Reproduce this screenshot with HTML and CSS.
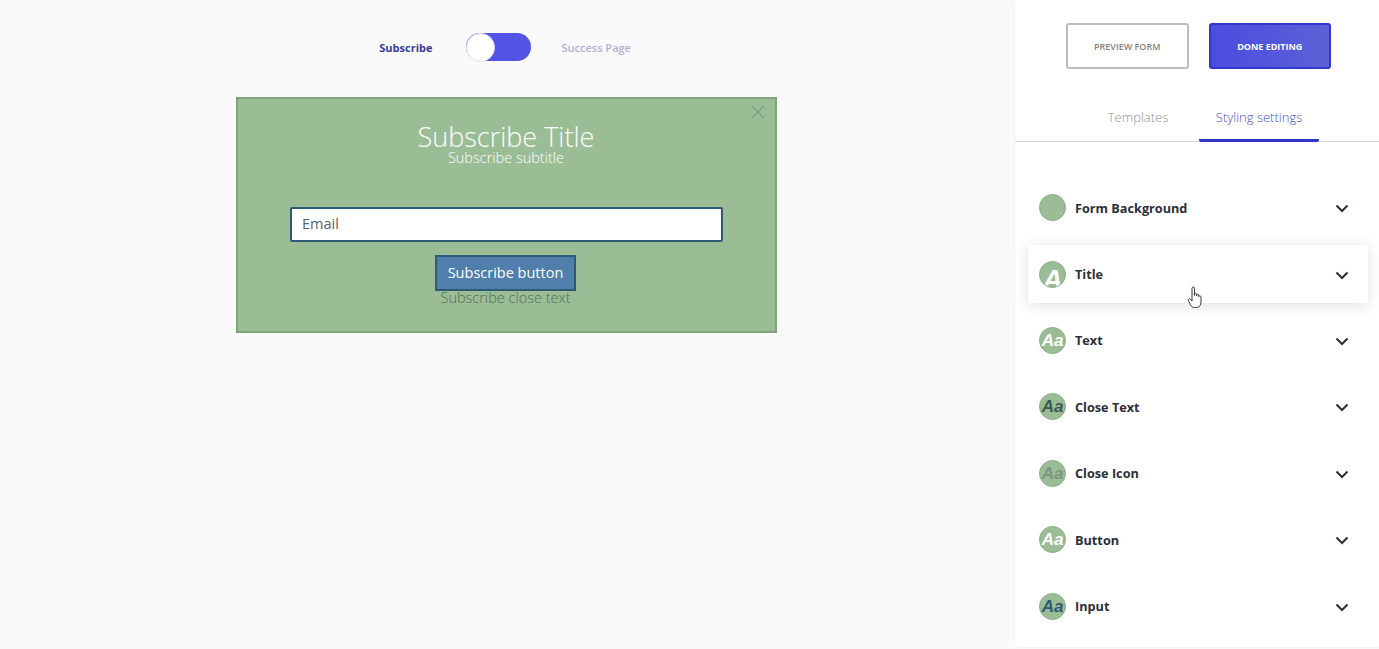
FILE: index.html
```html
<!DOCTYPE html>
<html lang="en">
  <head>
    <meta charset="UTF-8" />
    <title>Form editor</title>
    <link rel="stylesheet" href="styles.css">
  </head>
  <body>
    <div class="editor">
      <main class="canvas">
        <div class="mode-switch">
          <span class="mode active">Subscribe</span>
          <div class="toggle"><div class="knob"></div></div>
          <span class="mode">Success Page</span>
        </div>

        <div class="form-preview">
          <svg class="close-x" width="14" height="14" viewBox="0 0 14 14">
            <path d="M1 1L13 13M13 1L1 13" stroke="#7c9a80" stroke-width="1.2" fill="none" />
          </svg>
          <div class="form-title">Subscribe Title</div>
          <div class="form-subtitle">Subscribe subtitle</div>
          <div class="email-input">Email</div>
          <div class="subscribe-button">Subscribe button</div>
          <div class="close-text">Subscribe close text</div>
        </div>
      </main>

      <aside class="sidebar">
        <div class="actions">
          <button class="btn-preview">PREVIEW FORM</button>
          <button class="btn-done">DONE EDITING</button>
        </div>

        <div class="tabs">
          <div class="tab">Templates</div>
          <div class="tab selected">Styling settings</div>
        </div>

        <div class="settings">
          <div class="setting">
            <div class="swatch"></div>
            <span class="setting-name">Form Background</span>
            <svg class="chevron" width="14" height="9" viewBox="0 0 14 9"><path d="M1.5 1.5L7 7L12.5 1.5" /></svg>
          </div>
          <div class="setting hovered">
            <div class="swatch big-a">A</div>
            <span class="setting-name">Title</span>
            <svg class="chevron" width="14" height="9" viewBox="0 0 14 9"><path d="M1.5 1.5L7 7L12.5 1.5" /></svg>
            <svg class="hand" width="16" height="24" viewBox="0 0 16 24">
              <path d="M5 13V3.2C5 1.6 7.4 1.6 7.4 3.2V10.5V9.4C7.4 8 9.6 8 9.6 9.4V11V10C9.6 8.8 11.7 8.8 11.7 10.2V11.6C11.7 10.6 14 10.6 14 12V17C14 20 12.5 22.5 9.5 22.5H7.5C5.5 22.5 4.5 21.5 3.5 19.8L1.4 15.6C0.7 14 2.5 13 3.6 14.4L5 16Z" fill="#fff" stroke="#33383f" stroke-width="1" />
            </svg>
          </div>
          <div class="setting">
            <div class="swatch aa c-white">Aa</div>
            <span class="setting-name">Text</span>
            <svg class="chevron" width="14" height="9" viewBox="0 0 14 9"><path d="M1.5 1.5L7 7L12.5 1.5" /></svg>
          </div>
          <div class="setting">
            <div class="swatch aa c-dark">Aa</div>
            <span class="setting-name">Close Text</span>
            <svg class="chevron" width="14" height="9" viewBox="0 0 14 9"><path d="M1.5 1.5L7 7L12.5 1.5" /></svg>
          </div>
          <div class="setting">
            <div class="swatch aa c-grey">Aa</div>
            <span class="setting-name">Close Icon</span>
            <svg class="chevron" width="14" height="9" viewBox="0 0 14 9"><path d="M1.5 1.5L7 7L12.5 1.5" /></svg>
          </div>
          <div class="setting">
            <div class="swatch aa c-white">Aa</div>
            <span class="setting-name">Button</span>
            <svg class="chevron" width="14" height="9" viewBox="0 0 14 9"><path d="M1.5 1.5L7 7L12.5 1.5" /></svg>
          </div>
          <div class="setting">
            <div class="swatch aa c-blue">Aa</div>
            <span class="setting-name">Input</span>
            <svg class="chevron" width="14" height="9" viewBox="0 0 14 9"><path d="M1.5 1.5L7 7L12.5 1.5" /></svg>
          </div>
        </div>
      </aside>
    </div>
  </body>
</html>
```

FILE: styles.css
```css
* {
  box-sizing: border-box;
}

html,
body {
  height: 100%;
}

body {
  margin: 0;
  font-family: "Open Sans", sans-serif;
  background: #fafafa;
  overflow: hidden;
}

.editor {
  display: flex;
  height: 649px;
}

.canvas {
  width: 1015px;
  padding: 30px 2px 0 0;
  display: flex;
  flex-direction: column;
  align-items: center;
}

.mode-switch {
  display: flex;
  align-items: center;
  height: 34px;
  margin-left: -4px;
}

.mode {
  font-size: 11px;
  font-weight: 600;
  color: #b0afd8;
  width: 100px;
}

.mode.active {
  font-weight: 700;
  color: #3a3a9e;
  text-align: right;
  margin-right: 33px;
  width: 85px;
}

.mode:last-child {
  margin-left: 31px;
}

.toggle {
  width: 65px;
  height: 28px;
  background: #5353e6;
  border-radius: 14px;
  flex-shrink: 0;
}

.knob {
  width: 29px;
  height: 29px;
  border-radius: 50%;
  background: #fff;
  border: 1px solid #e3e3f2;
}

.form-preview {
  position: relative;
  width: 541px;
  height: 236px;
  margin-top: 33px;
  background: #9bbd95;
  border: 2px solid #7ea37b;
  display: flex;
  flex-direction: column;
  align-items: center;
  color: #fff;
  padding-top: 20px;
}

.close-x {
  position: absolute;
  top: 6px;
  right: 10px;
}

.form-title {
  font-size: 27px;
  font-weight: 300;
  line-height: 36px;
  margin-right: 1px;
}

.form-subtitle {
  font-size: 14.5px;
  line-height: 20px;
  margin: -7px 1px 0 0;
  font-weight: 300;
}

.email-input {
  width: 433px;
  height: 35px;
  margin-top: 39px;
  background: #fff;
  border: 2px solid #2e5a78;
  border-radius: 2px;
  padding-left: 10px;
  font-size: 14.5px;
  line-height: 30px;
  color: #56646c;
}

.subscribe-button {
  width: 141px;
  height: 36px;
  margin: 13px 2px 0 0;
  background: #4f7faa;
  border: 2px solid #2e5a78;
  font-size: 14.5px;
  line-height: 32px;
  text-align: center;
}

.close-text {
  font-size: 14.5px;
  line-height: 16px;
  margin: -1px 2px 0 0;
  color: #4f7058;
  font-weight: 300;
}

.sidebar {
  width: 364px;
  height: 647px;
  background: #fff;
  box-shadow: 0 0 3px rgba(0, 0, 0, 0.06);
}

.actions {
  display: flex;
  gap: 20px;
  padding: 23px 48px 0 51px;
}

.actions button {
  width: 123px;
  height: 46px;
  border-radius: 3px;
  font-family: inherit;
  font-size: 9px;
  padding: 0;
}

.btn-preview {
  background: #fff;
  border: 2px solid #bdbdbd;
  color: #828282;
  font-weight: 600;
}

.btn-done {
  background: linear-gradient(90deg, #4a4de0, #5c61d6);
  border: 2px solid #3437c8;
  color: #fff;
  font-weight: 700;
}

.tabs {
  display: flex;
  margin-top: 27px;
  height: 46px;
  padding-left: 63px;
  border-bottom: 1px solid #d9d9d9;
}

.tab {
  font-size: 13px;
  color: #8f8f8f;
  line-height: 43px;
  height: 46px;
  width: 120px;
  margin-right: 1px;
  font-weight: 300;
  text-align: center;
}

.tab.selected {
  color: #4c4fb8;
  border-bottom: 3px solid #3235c4;
  border-radius: 0 0 2px 2px;
}

.settings {
  padding: 37px 11px 0 13px;
}

.setting {
  position: relative;
  display: flex;
  align-items: center;
  height: 57.4px;
  margin-bottom: 9px;
  padding: 0 19px 0 11px;
}

.setting.hovered {
  background: #fff;
  box-shadow: 0 2px 14px rgba(0, 0, 0, 0.13);
}

.swatch {
  width: 27px;
  height: 27px;
  border-radius: 50%;
  background: #9bbd95;
  border: 1px solid #88ac85;
  overflow: hidden;
  flex-shrink: 0;
  margin-right: 9px;
  text-align: center;
  font-family: "Liberation Sans", sans-serif;
  font-style: italic;
  font-weight: 700;
}

.aa {
  font-size: 17px;
  line-height: 25px;
}

.big-a {
  font-size: 28px;
  line-height: 35px;
  color: #fff;
}

.c-white {
  color: #fff;
}

.c-dark {
  color: #3c5a52;
}

.c-grey {
  color: #7f9582;
}

.c-blue {
  color: #2e5a78;
}

.setting-name {
  font-size: 12.7px;
  font-weight: 700;
  color: #2a2f3a;
  flex: 1;
}

.chevron {
  margin-top: 2px;
}

.chevron path {
  fill: none;
  stroke: #2a2f3a;
  stroke-width: 2;
}

.hand {
  position: absolute;
  left: 159px;
  top: 40px;
}
```
